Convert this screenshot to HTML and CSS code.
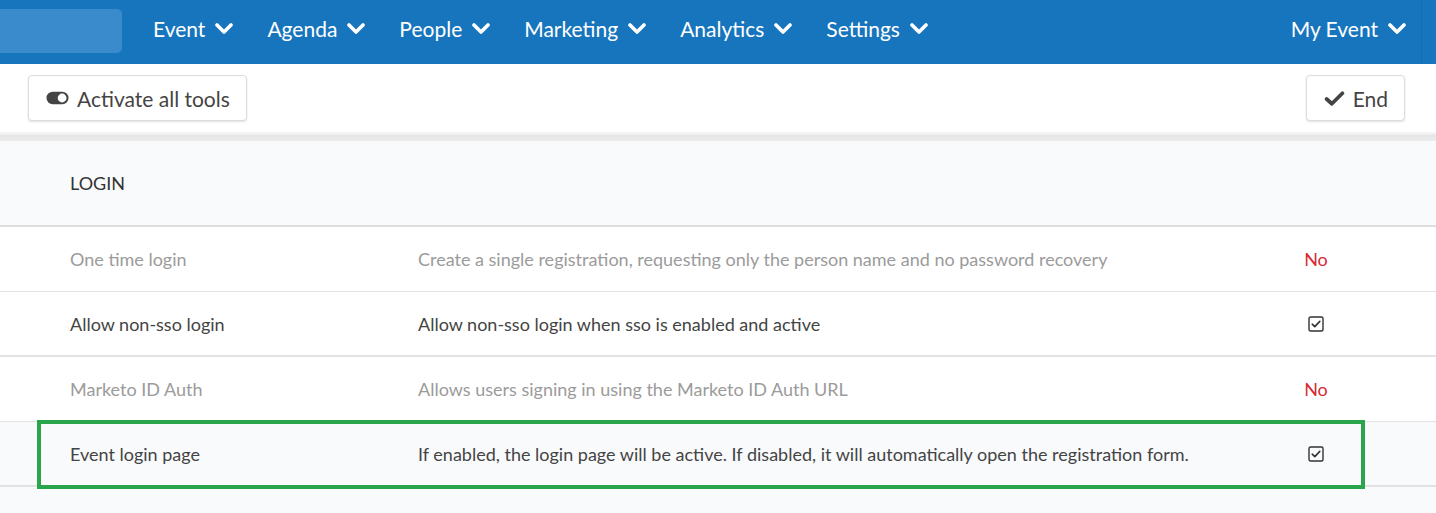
FILE: index.html
```html
<!DOCTYPE html>
<html>
<head>
<meta charset="utf-8">
<link rel="stylesheet" href="styles.css">
</head>
<body>
<nav class="topnav">
  <div class="logo"></div>
  <ul class="menu">
    <li class="menu-item">Event <svg class="chev" viewBox="0 0 18 12"><polyline points="2,2 9,9 16,2"/></svg></li>
    <li class="menu-item">Agenda <svg class="chev" viewBox="0 0 18 12"><polyline points="2,2 9,9 16,2"/></svg></li>
    <li class="menu-item">People <svg class="chev" viewBox="0 0 18 12"><polyline points="2,2 9,9 16,2"/></svg></li>
    <li class="menu-item">Marketing <svg class="chev" viewBox="0 0 18 12"><polyline points="2,2 9,9 16,2"/></svg></li>
    <li class="menu-item">Analytics <svg class="chev" viewBox="0 0 18 12"><polyline points="2,2 9,9 16,2"/></svg></li>
    <li class="menu-item">Settings <svg class="chev" viewBox="0 0 18 12"><polyline points="2,2 9,9 16,2"/></svg></li>
  </ul>
  <div class="event-switch">My Event <svg class="chev" viewBox="0 0 18 12"><polyline points="2,2 9,9 16,2"/></svg></div>
  <div class="nav-end"></div>
</nav>

<div class="toolbar">
  <button class="btn">
    <svg class="toggle" viewBox="0 0 24 14"><rect x="0.5" y="0.5" width="23" height="13" rx="6.5" fill="#444"/><circle cx="16.8" cy="7" r="4.6" fill="#fff"/></svg>
    Activate all tools
  </button>
  <button class="btn">
    <svg class="check" viewBox="0 0 20 16"><polyline points="2.5,8.5 7.5,13 17.5,3"/></svg>
    End
  </button>
</div>
<div class="toolbar-shadow"></div>

<section class="settings">
  <div class="section-head">LOGIN</div>
  <div class="row muted">
    <div class="cell">One time login</div>
    <div class="cell">Create a single registration, requesting only the person name and no password recovery</div>
    <div class="cell value no">No</div>
  </div>
  <div class="row">
    <div class="cell">Allow non-sso login</div>
    <div class="cell">Allow non-sso login when sso is enabled and active</div>
    <div class="cell value"><svg class="cbox" viewBox="0 0 16 16"><rect x="1" y="1" width="14" height="14" rx="1.5"/><polyline points="4.2,8.2 6.8,10.6 11.8,5.4"/></svg></div>
  </div>
  <div class="row muted">
    <div class="cell">Marketo ID Auth</div>
    <div class="cell">Allows users signing in using the Marketo ID Auth URL</div>
    <div class="cell value no">No</div>
  </div>
  <div class="row last">
    <div class="cell">Event login page</div>
    <div class="cell">If enabled, the login page will be active. If disabled, it will automatically open the registration form.</div>
    <div class="cell value"><svg class="cbox" viewBox="0 0 16 16"><rect x="1" y="1" width="14" height="14" rx="1.5"/><polyline points="4.2,8.2 6.8,10.6 11.8,5.4"/></svg></div>
    <div class="highlight"></div>
  </div>
</section>
</body>
</html>
```

FILE: styles.css
```css
* { box-sizing: border-box; }
html, body {
  margin: 0;
  padding: 0;
  background: #f9fafc;
  font-family: Lato, "Open Sans", "Liberation Sans", sans-serif;
  height: 513px;
  overflow: hidden;
}

.topnav {
  height: 64px;
  background: #1775bd;
  display: flex;
  align-items: center;
  color: #fff;
}
.logo {
  width: 122px;
  height: 44px;
  background: #3a8bcb;
  border-radius: 0 5px 5px 0;
  margin: 0 31px 2px 0;
}
.menu {
  list-style: none;
  margin: 0 0 7px 0;
  padding: 0;
  display: flex;
  gap: 34px;
}
.menu-item, .event-switch {
  font-size: 21px;
  display: flex;
  align-items: center;
  gap: 10px;
}
.chev {
  width: 18px;
  height: 12px;
  fill: none;
  stroke: #fff;
  stroke-width: 3.6;
  stroke-linecap: round;
  stroke-linejoin: round;
}
.event-switch {
  margin: 0 15px 7px auto;
}
.nav-end {
  width: 1px;
  height: 64px;
  background: #146bad;
  margin-right: 14px;
}

.toolbar {
  height: 68px;
  background: #fff;
  display: flex;
  justify-content: space-between;
  align-items: center;
  padding: 0 31px 0 28px;
}
.btn {
  height: 46px;
  background: #fff;
  border: 1px solid #dcdcdc;
  border-radius: 4px;
  box-shadow: 0 1px 2px rgba(0,0,0,0.12);
  font-family: inherit;
  font-size: 21px;
  color: #444;
  display: flex;
  align-items: center;
  gap: 8px;
  padding: 0 16px 0 17px;
}
.toggle { width: 23px; height: 14px; }
.check {
  width: 21px;
  height: 17px;
  fill: none;
  stroke: #444;
  stroke-width: 3.6;
  stroke-linecap: round;
  stroke-linejoin: round;
}
.toolbar-shadow {
  height: 9px;
  background: linear-gradient(#f4f4f4 0, #f4f4f4 2px, #e6e6e6 3px, #ebebeb 9px);
}

.settings { background: #f9fafc; }
.section-head {
  height: 86px;
  display: flex;
  align-items: center;
  padding-left: 70px;
  font-size: 18px;
  color: #333;
  border-bottom: 2px solid #dedede;
  background: #f9fafc;
}
.row {
  position: relative;
  display: grid;
  grid-template-columns: 348px 1fr 200px;
  align-items: center;
  height: 65px;
  padding: 0 20px 0 70px;
  background: #fff;
  border-bottom: 1px solid #e2e2e2;
  font-size: 18px;
  color: #444;
}
.row:nth-child(3) { border-bottom-width: 2px; }
.row.last {
  background: #f9fafc;
  border-bottom: 2px solid #e2e2e2;
}
.row.muted { color: #9b9b9b; }
.value { text-align: center; }
.no { color: #d42b33; }
.cbox {
  width: 16px;
  height: 16px;
  display: block;
  margin: 0 auto;
  fill: none;
  stroke: #333;
  stroke-width: 1.4;
}
.cbox polyline { stroke-width: 1.6; stroke-linecap: round; stroke-linejoin: round; }
.highlight {
  position: absolute;
  left: 37px;
  top: -2px;
  width: 1328px;
  height: 69px;
  border: 4px solid #2aa54b;
  pointer-events: none;
}
```
